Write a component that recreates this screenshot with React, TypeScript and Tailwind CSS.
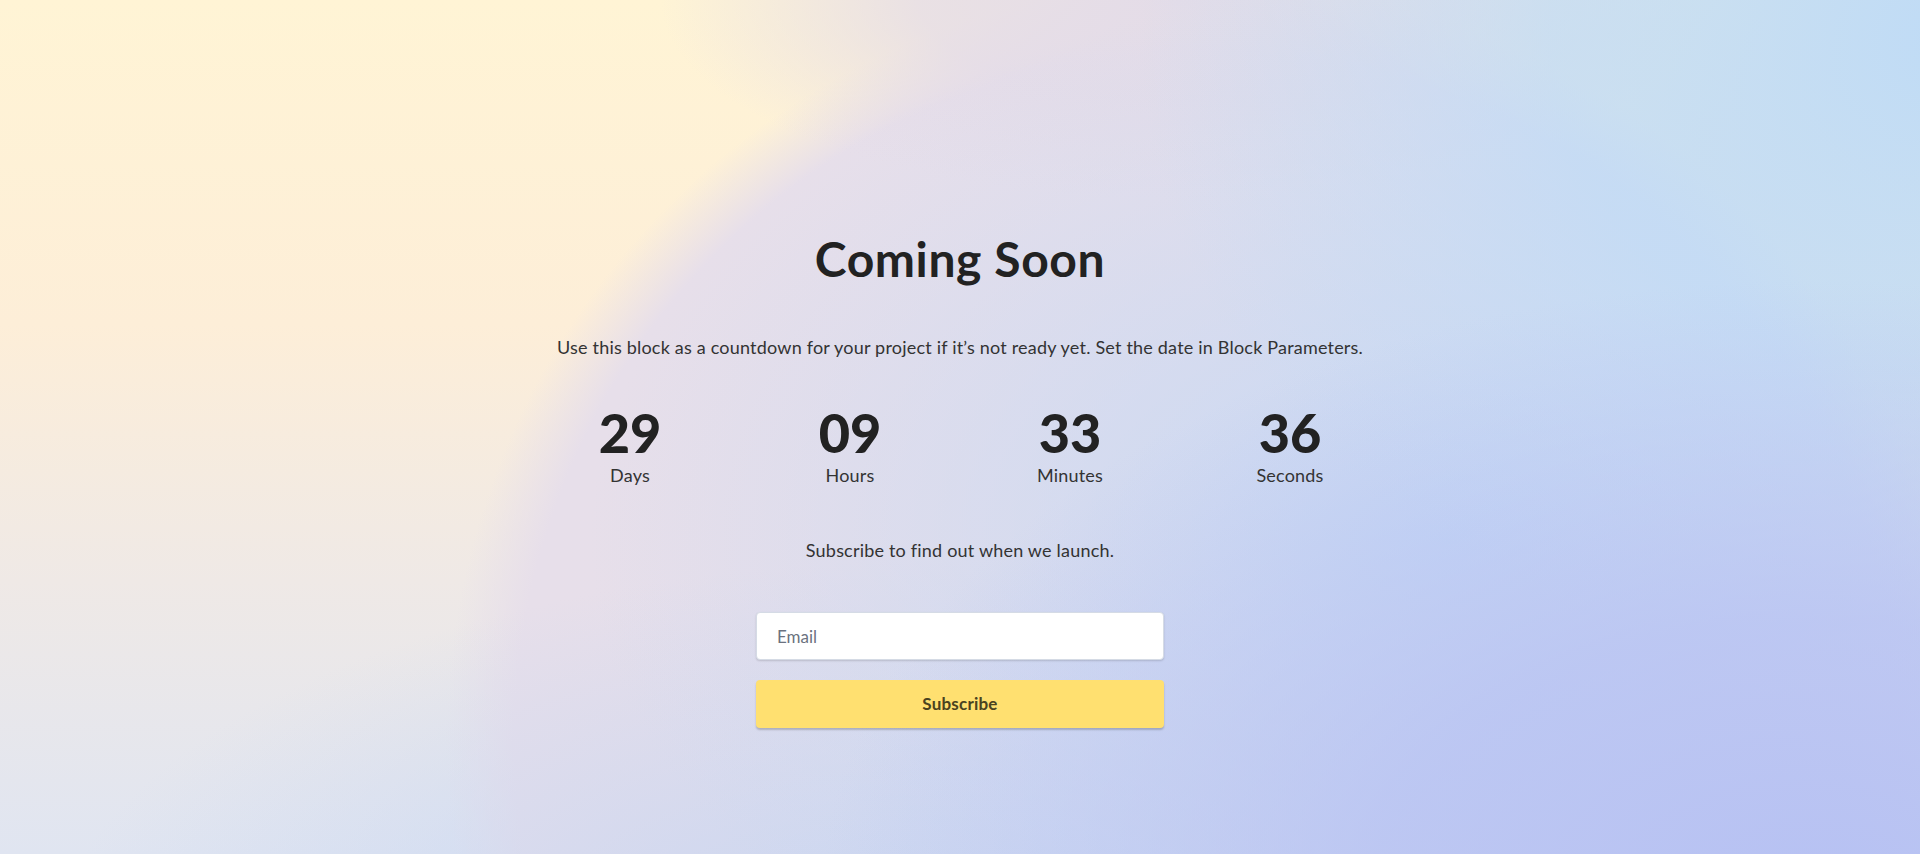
import React from 'react';

const units = [
  { value: '29', label: 'Days' },
  { value: '09', label: 'Hours' },
  { value: '33', label: 'Minutes' },
  { value: '36', label: 'Seconds' },
];

// soft blurred gradient backdrop, layered radial blobs over a warm base
const backdrop =
  'bg-[radial-gradient(ellipse_1000px_620px_at_1820px_900px,#b6c1f3_0%,rgba(182,193,243,0.75)_45%,rgba(182,193,243,0)_100%),radial-gradient(ellipse_820px_660px_at_1960px_40px,#bfdbf6_0%,rgba(191,219,246,0.75)_50%,rgba(191,219,246,0)_100%),radial-gradient(ellipse_860px_560px_at_1450px_540px,#c6d8f4_0%,rgba(198,216,244,0)_100%),radial-gradient(ellipse_900px_400px_at_950px_960px,#c6d5f2_0%,rgba(198,213,242,0)_100%),radial-gradient(ellipse_520px_200px_at_1180px_0px,#e4dce8_0%,rgba(228,220,232,0.8)_50%,rgba(228,220,232,0)_100%),radial-gradient(circle_760px_at_1206px_742px,#e8dfe9_0%,#e7dfea_91%,rgba(231,223,234,0)_100%),linear-gradient(180deg,#fff4d5_0%,#fdeed8_38%,#efe9e6_68%,#e0e5f1_100%)]';

export default function App() {
  return (
    <div
      className={`h-screen w-full overflow-hidden ${backdrop} font-['Lato','Liberation_Sans',sans-serif] text-[#222]`}
    >
      <div className="flex flex-col items-center pt-[231px]">
        <h1 className="text-[48px] leading-[56px] font-bold tracking-[0.6px] text-[#222]">
          Coming Soon
        </h1>

        <p className="mt-[46px] text-[18px] leading-[28px] tracking-[0.2px] text-[#333]">
          Use this block as a countdown for your project if it’s not ready yet. Set the date in Block Parameters.
        </p>

        <div className="mt-[46px] grid w-[880px] grid-cols-4">
          {units.map((u) => (
            <div key={u.label} className="flex flex-col items-center">
              <span className="text-[54px] leading-[52px] font-black text-[#222]">{u.value}</span>
              <span className="mt-[2px] text-[18px] leading-[28px] tracking-[0.2px] text-[#333]">{u.label}</span>
            </div>
          ))}
        </div>

        <p className="mt-[47px] text-[18px] leading-[28px] tracking-[0.2px] text-[#333]">
          Subscribe to find out when we launch.
        </p>

        <form className="mt-[48px] flex w-[408px] flex-col gap-[20px]" onSubmit={(e) => e.preventDefault()}>
          <input
            type="email"
            placeholder="Email"
            className="h-[48px] w-full rounded-[4px] border border-[#d5dbe5] bg-white px-[20px] text-[17px] text-[#333] shadow-[0_1px_2px_rgba(0,0,0,0.15)] outline-none placeholder:text-[#6b7280]"
          />
          <button
            type="submit"
            className="h-[48px] w-full rounded-[4px] bg-[#ffe070] text-[17px] font-bold tracking-[0.2px] text-[#4a4320] shadow-[0_2px_2px_rgba(0,0,0,0.2)]"
          >
            Subscribe
          </button>
        </form>
      </div>
    </div>
  );
}
